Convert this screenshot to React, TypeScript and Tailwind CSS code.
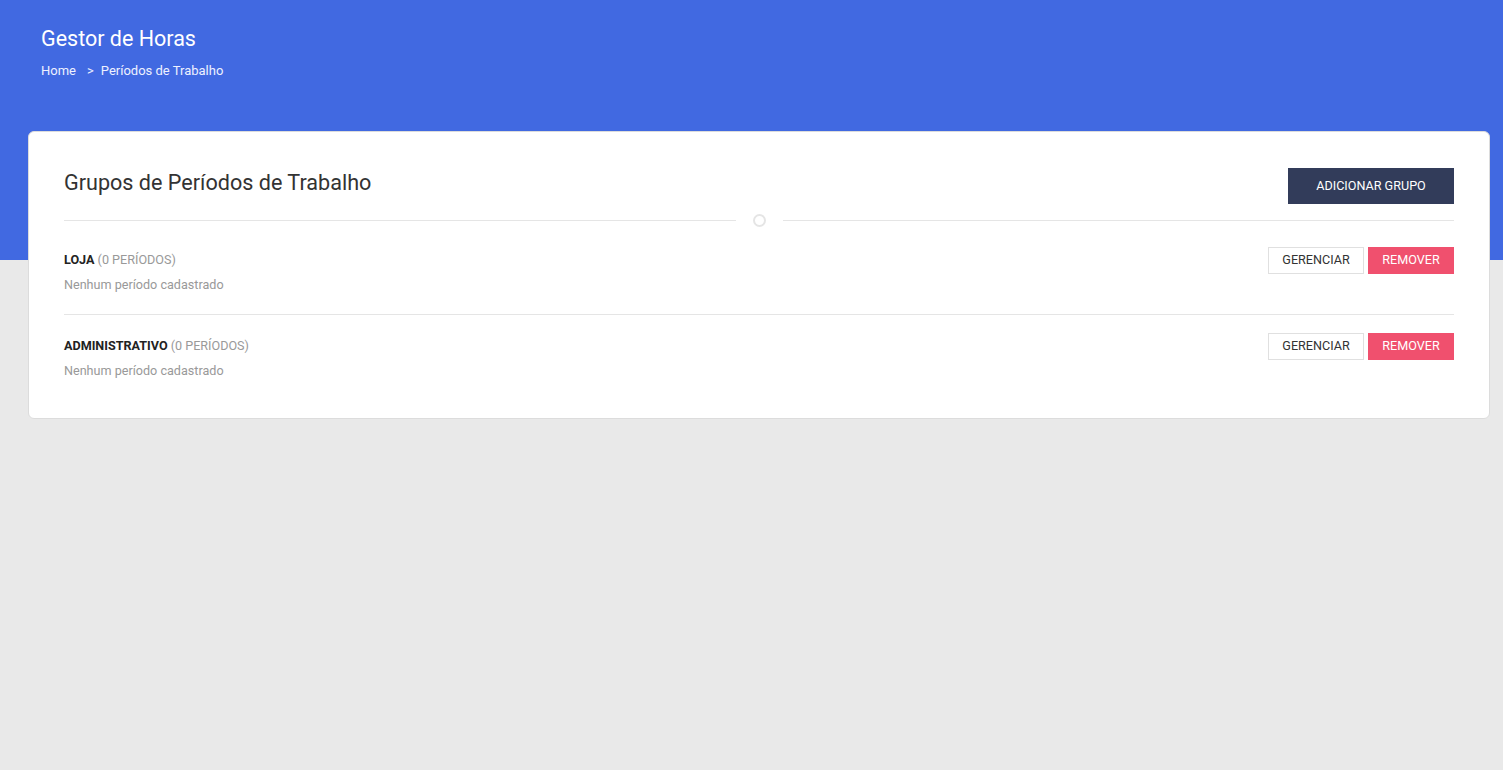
import React from "react";

function Row({ name, last }: { name: string; last?: boolean }) {
  return (
    <div className={`flex items-start justify-between pt-[18px] pb-[21px] ${last ? "" : "border-b border-[#e5e5e5]"}`}>
      <div className="pt-[5px]">
        <div className="text-[12.6px] leading-4 text-[#999]">
          <span className="font-bold text-[#222]">{name}</span> (0 PERÍODOS)
        </div>
        <div className="mt-[9px] text-[12.6px] leading-4 text-[#999]">Nenhum período cadastrado</div>
      </div>
      <div className="flex gap-[4px]">
        <button className="h-[27px] w-[96px] border border-[#e0e0e0] bg-white text-[12.6px] text-[#333]">GERENCIAR</button>
        <button className="h-[27px] w-[86px] bg-[#f0506e] text-[12.6px] text-white">REMOVER</button>
      </div>
    </div>
  );
}

export default function App() {
  return (
    <div className="min-h-[770px] bg-[#e9e9e9]" style={{ fontFamily: "Roboto, 'Liberation Sans', sans-serif" }}>
      <div className="h-[260px] bg-[#4169e1] pl-[41px] pt-[27px]">
        <div className="text-[21.5px] leading-6 text-white">Gestor de Horas</div>
        <div className="mt-[12px] flex text-[13px] leading-4 text-[#eef1ff]">
          <span>Home</span>
          <span className="ml-[11px] mr-[7px]">&gt;</span>
          <span>Períodos de Trabalho</span>
        </div>
      </div>
      <div className="ml-[28px] mr-[13px] -mt-[129px] rounded-[6px] border border-[#dcdcdc] bg-white px-[35px] pb-[18px] pt-[36px]">
        <div className="flex items-start justify-between">
          <div className="mt-[3px] text-[21.6px] leading-6 text-[#333]">Grupos de Períodos de Trabalho</div>
          <button className="h-[36px] w-[166px] bg-[#323c5a] text-[12.6px] text-white">ADICIONAR GRUPO</button>
        </div>
        <div className="mt-[10px] flex items-center">
          <div className="h-px flex-1 bg-[#e5e5e5]" />
          <div className="mx-[17px] h-[13px] w-[13px] rounded-full border-2 border-[#e5e5e5]" />
          <div className="h-px flex-1 bg-[#e5e5e5]" />
        </div>
        <div className="mt-[2px]">
          <Row name="LOJA" />
          <Row name="ADMINISTRATIVO" last />
        </div>
      </div>
    </div>
  );
}
